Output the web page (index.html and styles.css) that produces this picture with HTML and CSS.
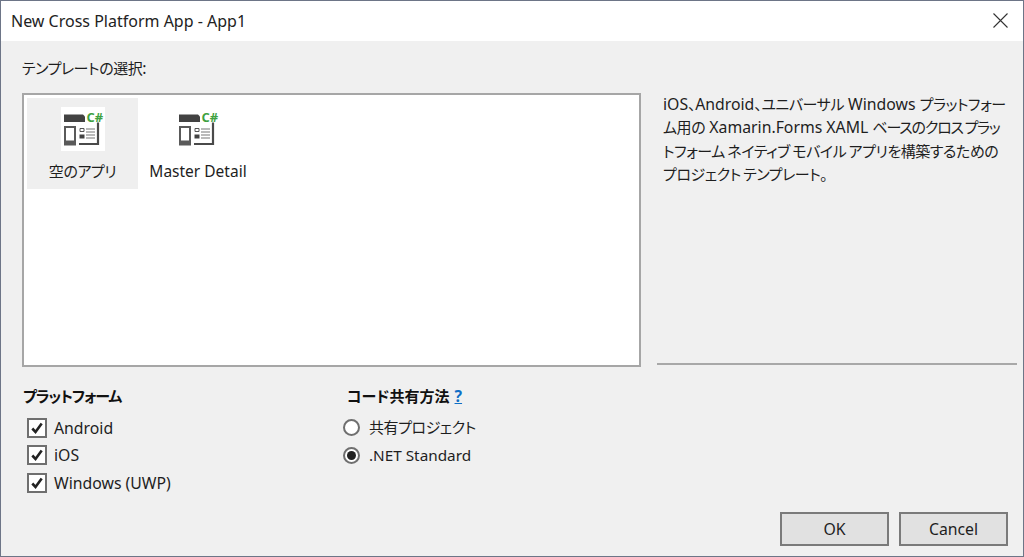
FILE: index.html
```html
<!DOCTYPE html>
<html lang="ja">
<head>
<meta charset="utf-8">
<title>New Cross Platform App - App1</title>
<link rel="stylesheet" href="styles.css">
</head>
<body>
<div class="dialog">
  <header class="titlebar">
    <span class="title">New Cross Platform App - App1</span>
    <svg class="close" width="15" height="15" viewBox="0 0 15 15"><path d="M.5.5l14 14M14.500.5l-14 14" stroke="#333" stroke-width="1.100" fill="none"/></svg>
  </header>
  <main class="content">
    <div class="section-label"><span class="ja">テンプレートの選択</span>:</div>
    <div class="top">
      <div class="listbox">
        <div class="tile selected">
          <svg class="icon white" width="44" height="44" viewBox="0 0 44 44">
            <path d="M3 7.500h19l2 2v5.500H3z" fill="#424242"/>
            <path d="M4 20h10v17.500H4z" fill="#fff" stroke="#5a5a5a" stroke-width="2"/>
            <path d="M4 33.500h10v4H4z" fill="#5a5a5a"/>
            <path d="M19 21.500h4v3h-4z" fill="#fff" stroke="#555"/>
            <path d="M18.500 27.500h5v4h-5z" fill="#424242"/>
            <path d="M25 22h9M25 25h9M25 28h9M25 31h9" stroke="#777" stroke-width="1.200"/>
            <path d="M37 15.500v21.500H18" fill="none" stroke="#4a4a4a" stroke-width="2.200"/>
            <text x="25.500" y="15" class="cs">C#</text>
          </svg>
          <span class="tile-label ja">空のアプリ</span>
        </div>
        <div class="tile">
          <svg class="icon" width="44" height="44" viewBox="0 0 44 44">
            <path d="M3 7.500h19l2 2v5.500H3z" fill="#424242"/>
            <path d="M4 20h10v17.500H4z" fill="#fff" stroke="#5a5a5a" stroke-width="2"/>
            <path d="M4 33.500h10v4H4z" fill="#5a5a5a"/>
            <path d="M19 21.500h4v3h-4z" fill="#fff" stroke="#555"/>
            <path d="M18.500 27.500h5v4h-5z" fill="#424242"/>
            <path d="M25 22h9M25 25h9M25 28h9M25 31h9" stroke="#777" stroke-width="1.200"/>
            <path d="M37 15.500v21.500H18" fill="none" stroke="#4a4a4a" stroke-width="2.200"/>
            <text x="25.500" y="15" class="cs">C#</text>
          </svg>
          <span class="tile-label latin-tight">Master Detail</span>
        </div>
      </div>
      <aside class="side">
        <p class="desc">iOS<span class="ja">、</span>Android<span class="ja">、ユニバーサル</span> Windows <span class="ja">プラットフォー</span><br><span class="ja">ム用の</span> Xamarin.Forms XAML <span class="ja ja-tight">ベースのクロス プラッ</span><br><span class="ja">トフォーム ネイティブ モバイル アプリを構築するための</span><br><span class="ja">プロジェクト テンプレート。</span></p>
      </aside>
    </div>
    <div class="options">
      <section class="platforms">
        <h2 class="group-title platform-title">プラットフォーム</h2>
        <div class="row"><span class="check"><svg width="14" height="14" viewBox="0 0 14 14"><path d="M2.300 7.500l3.200 3.400 6.200-8.400" fill="none" stroke="#222" stroke-width="2.600"/></svg></span>Android</div>
        <div class="row"><span class="check"><svg width="14" height="14" viewBox="0 0 14 14"><path d="M2.300 7.500l3.200 3.400 6.200-8.400" fill="none" stroke="#222" stroke-width="2.600"/></svg></span>iOS</div>
        <div class="row"><span class="check"><svg width="14" height="14" viewBox="0 0 14 14"><path d="M2.300 7.500l3.200 3.400 6.200-8.400" fill="none" stroke="#222" stroke-width="2.600"/></svg></span>Windows (UWP)</div>
      </section>
      <section class="sharing">
        <h2 class="group-title"><span class="share-title">コード共有方法</span> <a class="help">?</a></h2>
        <div class="row radio-row"><span class="radio"></span><span class="ja radio-ja">共有プロジェクト</span></div>
        <div class="row radio-row latin-small"><span class="radio on"></span>.NET Standard</div>
      </section>
    </div>
    <footer class="buttons">
      <button class="btn">OK</button>
      <button class="btn">Cancel</button>
    </footer>
  </main>
</div>
</body>
</html>
```
FILE: styles.css
```css
* { box-sizing: border-box; }
html, body { margin: 0; height: 100%; }
body {
  font-family: "Noto Sans", "Noto Sans CJK JP", sans-serif;
  font-size: 15.800px;
  font-feature-settings: "palt" 1;
  color: #1e1e1e;
  background: #f0f0f0;
}
.ja { font-size: 15px; letter-spacing: -.45px; }
.latin-tight { font-size: 15.500px; }
.latin-small { font-size: 15.300px; }
.dialog {
  width: 1024px;
  height: 557px;
  border: 1px solid #6d7587;
  display: flex;
  flex-direction: column;
  overflow: hidden;
}
.titlebar {
  height: 40px;
  background: #fff;
  display: flex;
  align-items: center;
  justify-content: space-between;
  padding: 0 15px 0 10px;
  flex: none;
}
.title { font-size: 16px; color: #222; }
.close { flex: none; margin-bottom: 2px; }
.content {
  flex: 1;
  display: flex;
  flex-direction: column;
  padding: 15px 6px 10px 21px;
  min-height: 0;
}
.section-label { line-height: 24px; height: 24px; margin-bottom: 13px; }
.top { display: flex; height: 274px; flex: none; }
.listbox {
  width: 619px;
  flex: none;
  border: 2px solid #a6a6a6;
  background: #fff;
  padding: 3px;
  display: flex;
  align-items: flex-start;
}
.tile {
  width: 111px;
  height: 91px;
  display: flex;
  flex-direction: column;
  align-items: center;
  padding-top: 9px;
}
.tile.selected { background: #efefef; }
.tile + .tile { width: 120px; }
.icon { display: block; flex: none; }
.icon.white { background: #fff; }
.cs { font: bold 13px "Open Sans", sans-serif; fill: #3fa142; }
.tile-label { line-height: 20px; margin-top: 10px; white-space: nowrap; }
.side {
  margin-left: 16px;
  width: 360px;
  flex: none;
  border-bottom: 2px solid #a8a8a8;
  height: 272px;
  padding-left: 6px;
}
.desc { margin: 0; line-height: 23.300px; white-space: nowrap; }
.desc .ja { word-spacing: -1px; }
.desc .ja-tight { letter-spacing: -1.200px; }
.options { display: flex; margin-top: 17px; }
.platforms { width: 324px; }
.group-title {
  margin: 0 0 6px;
  font-size: 15.800px;
  font-weight: 700;
  line-height: 24px;
  color: #111;
}
.platform-title { font-size: 15px; letter-spacing: -1px; padding-left: 1px; }
.share-title { font-size: 15px; padding-left: 1px; }
.help { color: #0f6fc6; text-decoration: underline; margin-left: 1px; }
.row {
  display: flex;
  align-items: center;
  height: 27.500px;
  padding-left: 5px;
  white-space: nowrap;
}
.radio-ja { margin-top: -3px; }
.check {
  width: 20px;
  height: 20px;
  border: 2px solid #6f6f6f;
  background: #fff;
  margin-right: 7px;
  display: flex;
  align-items: center;
  justify-content: center;
  flex: none;
}
.radio-row { padding-left: 0; margin-left: -3px; }
.radio {
  width: 17px;
  height: 17px;
  border-radius: 50%;
  border: 2px solid #6f6f6f;
  background: #fff;
  margin-right: 9px;
  display: flex;
  align-items: center;
  justify-content: center;
  flex: none;
}
.radio.on::after {
  content: "";
  width: 9px;
  height: 9px;
  border-radius: 50%;
  background: #222;
}
.buttons {
  margin-top: auto;
  display: flex;
  justify-content: flex-end;
  gap: 10px;
  padding-right: 9px;
}
.btn {
  width: 109px;
  height: 34px;
  background: #e1e1e1;
  border: 2px solid #7a7a7a;
  font: 15.800px "Noto Sans", sans-serif;
  color: #1e1e1e;
  padding: 0;
}
```
